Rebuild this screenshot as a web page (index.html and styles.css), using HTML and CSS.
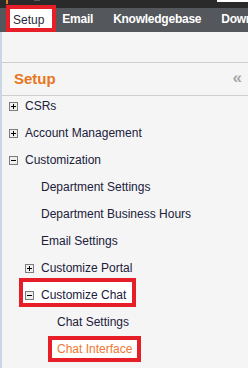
FILE: index.html
```html
<!DOCTYPE html>
<html>
<head>
<meta charset="utf-8">
<link rel="stylesheet" href="styles.css">
</head>
<body>
<div class="top">
  <span class="logo"></span>
  <span class="topmark"></span>
  <span class="topbox"></span>
</div>
<nav class="nav">
  <span class="tab active"><span class="mark tabmark">Setup</span></span>
  <span class="tab first">Email</span>
  <span class="tab">Knowledgebase</span>
  <span class="tab">Downloads</span>
</nav>
<div class="side">
  <div class="spacer"></div>
  <div class="head"><span class="title">Setup</span><span class="collapse">&laquo;</span></div>
  <ul class="tree">
    <li class="row l1"><svg class="ico" width="9" height="9" viewBox="0 0 9 9"><rect x="0.5" y="0.5" width="8" height="8" fill="#eeeeee" stroke="#7c7c7c"/><path d="M2 4.5h5M4.5 2v5" stroke="#000"/></svg>CSRs</li>
    <li class="row l1"><svg class="ico" width="9" height="9" viewBox="0 0 9 9"><rect x="0.5" y="0.5" width="8" height="8" fill="#eeeeee" stroke="#7c7c7c"/><path d="M2 4.5h5M4.5 2v5" stroke="#000"/></svg>Account Management</li>
    <li class="row l1"><svg class="ico" width="9" height="9" viewBox="0 0 9 9"><rect x="0.5" y="0.5" width="8" height="8" fill="#eeeeee" stroke="#7c7c7c"/><path d="M2 4.5h5" stroke="#000"/></svg>Customization</li>
    <li class="row l2">Department Settings</li>
    <li class="row l2">Department Business Hours</li>
    <li class="row l2">Email Settings</li>
    <li class="row l2"><svg class="ico" width="9" height="9" viewBox="0 0 9 9"><rect x="0.5" y="0.5" width="8" height="8" fill="#eeeeee" stroke="#7c7c7c"/><path d="M2 4.5h5M4.5 2v5" stroke="#000"/></svg>Customize Portal</li>
    <li class="row l2"><span class="mark chatmark"><svg class="ico" width="9" height="9" viewBox="0 0 9 9"><rect x="0.5" y="0.5" width="8" height="8" fill="#eeeeee" stroke="#7c7c7c"/><path d="M2 4.5h5" stroke="#000"/></svg>Customize Chat</span></li>
    <li class="row l3">Chat Settings</li>
    <li class="row l3"><span class="mark activemark">Chat Interface</span></li>
  </ul>
</div>
</body>
</html>
```

FILE: styles.css
```css
html, body {
  margin: 0;
  padding: 0;
}
body {
  width: 248px;
  height: 368px;
  overflow: hidden;
  background: #f5f5f5;
  font-family: "Liberation Sans", Arial, sans-serif;
  font-size: 12px;
}
.top {
  height: 8px;
  background: #2a2a2a;
  display: flex;
  align-items: flex-start;
}
.logo {
  width: 2px;
  height: 4px;
  margin-left: 6px;
  background: #e07a20;
}
.topmark {
  width: 6px;
  height: 1px;
  margin-left: 26px;
  background: #5a5a5a;
}
.topbox {
  width: 31px;
  height: 2px;
  margin-left: auto;
  background: #ffffff;
}
.nav {
  height: 24px;
  background: #54575b;
  display: flex;
  white-space: nowrap;
}
.tab {
  color: #ffffff;
  font-weight: bold;
  line-height: 22px;
  margin-left: 20px;
  letter-spacing: -0.25px;
}
.tab.first {
  margin-left: 6px;
}
.tab.active {
  margin-left: 6px;
  height: 27px;
  margin-top: -3px;
}
.mark {
  display: inline-block;
  border: 4px solid #e61e28;
  background: #ffffff;
  line-height: 14px;
}
.tabmark {
  box-sizing: border-box;
  height: 27px;
  padding: 2px 8px 0 3px;
  line-height: 19px;
  color: #2a2a3a;
  font-weight: normal;
  letter-spacing: 0;
}
.side {
  border-left: 2px solid #c8d6e6;
  height: 336px;
}
.spacer {
  height: 30px;
}
.head {
  border-top: 1px solid #cfcfcf;
  border-bottom: 1px solid #cfcfcf;
  height: 32px;
  display: flex;
  justify-content: space-between;
  align-items: flex-start;
  padding: 0 6px 0 12px;
}
.title {
  color: #e8761c;
  font-weight: bold;
  font-size: 15px;
  line-height: 32px;
}
.collapse {
  color: #a6a6a6;
  font-weight: bold;
  font-size: 17px;
  line-height: 30px;
}
.tree {
  list-style: none;
  margin: 0;
  padding: 0;
}
.row {
  line-height: 21px;
  padding-bottom: 6px;
  color: #20203a;
  white-space: nowrap;
}
.l1 { padding-left: 23px; }
.l2 { padding-left: 39px; }
.l3 { padding-left: 55px; }
.ico {
  display: inline-block;
  vertical-align: -1px;
  margin-left: -16px;
  margin-right: 7px;
}
.chatmark {
  padding: 6px 6px 1px 2px;
  margin: -10px -10px -5px -22px;
}
.chatmark .ico {
  margin-left: 0;
}
.activemark {
  color: #f07830;
  padding: 2px 5px 2px 5px;
  margin: -6px -9px -6px -9px;
}
```
